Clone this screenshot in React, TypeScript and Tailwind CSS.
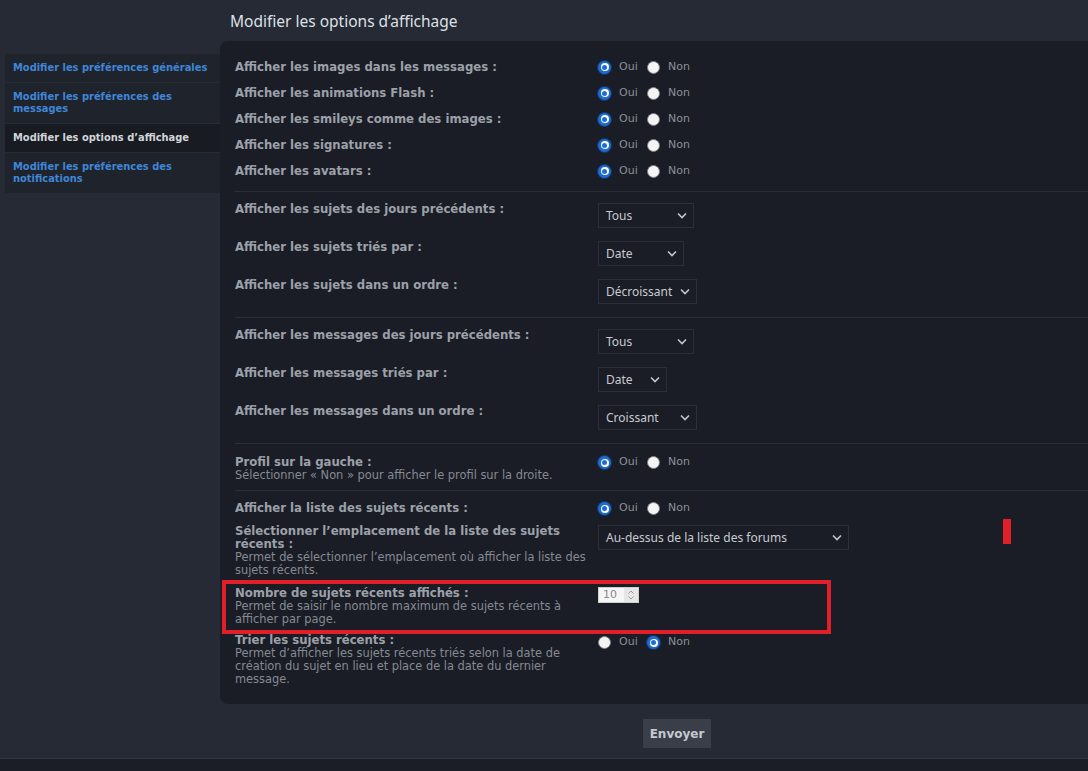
import type { ReactNode } from 'react';

const FONT = "font-['Verdana','DejaVu_Sans',sans-serif]";

function Radio({ checked }: { checked: boolean }) {
  if (checked) {
    return (
      <span className="flex h-[13px] w-[13px] shrink-0 items-center justify-center rounded-full bg-[#1d6cd3] shadow-[0_0_0_1px_#123a6e]">
        <span className="flex h-[8px] w-[8px] items-center justify-center rounded-full bg-white">
          <span className="h-[5px] w-[5px] rounded-full bg-[#1d6cd3]" />
        </span>
      </span>
    );
  }
  return <span className="block h-[13px] w-[13px] shrink-0 rounded-full border border-[#7a7d83] bg-[#f4f4f4]" />;
}

function YesNo({ yes = true }: { yes?: boolean }) {
  return (
    <div className="flex h-[13px] items-center text-[11px] text-[#8b9099]">
      <Radio checked={yes} />
      <span className="ml-[8px] w-[28px]">Oui</span>
      <Radio checked={!yes} />
      <span className="ml-[8px]">Non</span>
    </div>
  );
}

function Chevron() {
  return (
    <svg width="10" height="7" viewBox="0 0 10 7" fill="none">
      <path d="M1 1.5 5 5.5 9 1.5" stroke="#c3c7cd" strokeWidth="1.6" />
    </svg>
  );
}

function Select({ value, width }: { value: string; width: string }) {
  return (
    <div
      className={`flex h-[25px] items-center justify-between border border-[#2b2f39] bg-[#1a1d25] pl-[7px] pr-[6px] font-['Noto_Sans',sans-serif] text-[12px] text-[#c7cbd1] ${width}`}
    >
      <span>{value}</span>
      <Chevron />
    </div>
  );
}

function Row({
  label,
  desc,
  control,
  className = '',
}: {
  label: string;
  desc?: string;
  control: ReactNode;
  className?: string;
}) {
  return (
    <div className={`flex ${className}`}>
      <div className="w-[363px] shrink-0 pr-[12px] leading-[13px]">
        <div className="text-[11.7px] font-bold text-[#9ca1a9]">{label}</div>
        {desc && <div className="text-[11.4px] text-[#858a93]">{desc}</div>}
      </div>
      <div>{control}</div>
    </div>
  );
}

const sideLinks = [
  { text: 'Modifier les préférences générales', active: false },
  { text: 'Modifier les préférences des messages', active: false },
  { text: 'Modifier les options d’affichage', active: true },
  { text: 'Modifier les préférences des notifications', active: false },
];

export default function App() {
  return (
    <div className={`relative flex min-h-[771px] flex-col overflow-hidden bg-[#252a35] ${FONT}`}>
      <div className="flex">
        <nav className="ml-[5px] mt-[54px] flex w-[215px] shrink-0 flex-col gap-px self-start">
          {sideLinks.map((l, i) => (
            <a
              key={l.text}
              href="#"
              className={`block py-[8px] pl-[8px] font-['DejaVu_Sans_Condensed','DejaVu_Sans',sans-serif] text-[11px] font-bold leading-[12px] ${
                i === 1 || i === 3 ? 'pr-[40px]' : 'pr-0'
              } ${l.active ? 'bg-[#181b21] text-[#d2d5da]' : 'bg-[#1f232b] text-[#3f86d8]'}`}
            >
              {l.text}
            </a>
          ))}
        </nav>

        <main className="w-[914px] shrink-0">
          <h2 className="h-[41px] pl-[10px] pt-[11px] font-['Noto_Sans',sans-serif] text-[15.5px] leading-[20px] text-[#dde0e5]">
            Modifier les options d’affichage
          </h2>

          <div className="rounded-l-[8px] bg-[#1a1d25] pb-[18px] pl-[15px]">
            <div className="flex flex-col pb-[7px] pt-[13px]">
              {[
                'Afficher les images dans les messages :',
                'Afficher les animations Flash :',
                'Afficher les smileys comme des images :',
                'Afficher les signatures :',
                'Afficher les avatars :',
              ].map((t) => (
                <Row key={t} label={t} className="h-[26px] items-center" control={<YesNo />} />
              ))}
            </div>

            <div className="flex flex-col gap-[13px] border-t border-[#2a2e38] pb-[13px] pt-[11px]">
              <Row label="Afficher les sujets des jours précédents :" control={<Select value="Tous" width="w-[96px]" />} />
              <Row label="Afficher les sujets triés par :" control={<Select value="Date" width="w-[86px]" />} />
              <Row label="Afficher les sujets dans un ordre :" control={<Select value="Décroissant" width="w-[99px]" />} />
            </div>

            <div className="flex flex-col gap-[13px] border-t border-[#2a2e38] pb-[13px] pt-[11px]">
              <Row label="Afficher les messages des jours précédents :" control={<Select value="Tous" width="w-[96px]" />} />
              <Row label="Afficher les messages triés par :" control={<Select value="Date" width="w-[69px]" />} />
              <Row label="Afficher les messages dans un ordre :" control={<Select value="Croissant" width="w-[99px]" />} />
            </div>

            <div className="border-t border-[#2a2e38] pb-[8px] pt-[12px]">
              <Row
                label="Profil sur la gauche :"
                desc="Sélectionner « Non » pour afficher le profil sur la droite."
                control={<YesNo />}
              />
            </div>

            <div className="flex flex-col border-t border-[#2a2e38] pt-[11px]">
              <Row label="Afficher la liste des sujets récents :" control={<YesNo />} />
              <Row
                className="mt-[10px]"
                label="Sélectionner l’emplacement de la liste des sujets récents :"
                desc="Permet de sélectionner l’emplacement où afficher la liste des sujets récents."
                control={<Select value="Au-dessus de la liste des forums" width="w-[251px]" />}
              />
              <Row
                className="mt-[10px]"
                label="Nombre de sujets récents affichés :"
                desc="Permet de saisir le nombre maximum de sujets récents à afficher par page."
                control={
                  <div className="flex h-[16px] w-[41px] items-center border border-[#d0d0d0] bg-[#f6f6f6] text-[11px] text-[#8a8a8a]">
                    <span className="flex-1 pl-[4px]">10</span>
                    <span className="flex h-full w-[14px] flex-col items-center justify-center bg-[#e6e6e6]">
                      <svg width="8" height="12" viewBox="0 0 8 12" fill="none">
                        <path d="M1.5 4.5 4 2l2.5 2.5M1.5 7.5 4 10l2.5-2.5" stroke="#9a9a9a" strokeWidth="1" />
                      </svg>
                    </span>
                  </div>
                }
              />
              <Row
                className="mt-[8px]"
                label="Trier les sujets récents :"
                desc="Permet d’afficher les sujets récents triés selon la date de création du sujet en lieu et place de la date du dernier message."
                control={
                  <div className="pt-[2px]">
                    <YesNo yes={false} />
                  </div>
                }
              />
            </div>
          </div>

          <div className="flex justify-center pb-[10px] pt-[15px]">
            <button
              type="button"
              className="h-[29px] w-[68px] bg-[#3a3e48] text-[12px] font-bold text-[#c5c9cf]"
            >
              Envoyer
            </button>
          </div>
        </main>
      </div>

      <div className="flex-1 border-t border-[#30343f] bg-[#1b1e26]" />

      {/* annotation overlays */}
      <div className="pointer-events-none absolute left-[222px] top-[580px] h-[54px] w-[609px] border-[4px] border-[#e01f28]" />
      <div className="pointer-events-none absolute left-[1003px] top-[519px] h-[25px] w-[8px] bg-[#e01f28]" />
    </div>
  );
}
